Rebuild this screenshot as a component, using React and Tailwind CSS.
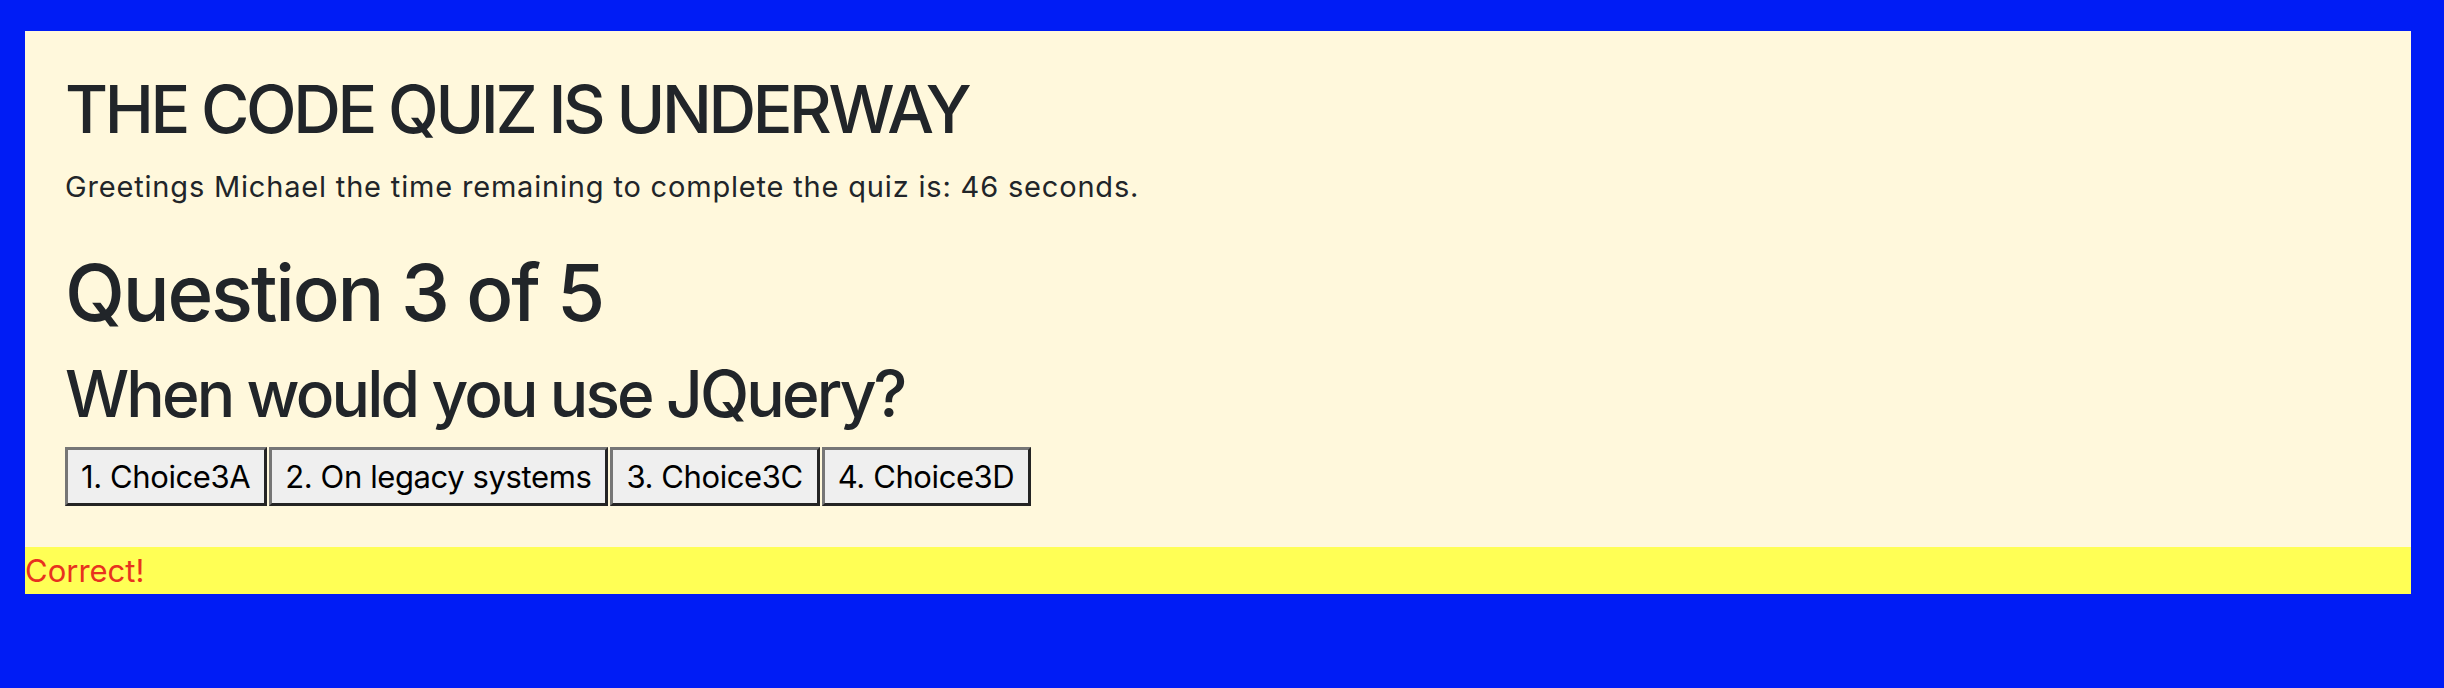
export default function App() {
  const choices = ["1. Choice3A", "2. On legacy systems", "3. Choice3C", "4. Choice3D"];
  return (
    <div className="min-h-[688px] w-[2444px] bg-[#001cf5] pt-[31px] pl-[25px] font-['Inter',sans-serif]">
      <div className="w-[2386px] bg-[#fff8dc]">
        <div className="pl-[40px] pt-[39px] pb-[41px] text-[#212529]">
          <h1 className="text-[66px] leading-[1.2] font-medium tracking-[-3.4px]">THE CODE QUIZ IS UNDERWAY</h1>
          <p className="mt-[16px] text-[29px] leading-[1.5] tracking-[0.82px]">Greetings Michael the time remaining to complete the quiz is: 46 seconds.</p>
          <h2 className="mt-[37px] text-[78px] leading-[1.2] font-medium tracking-[-2.2px]">Question 3 of 5</h2>
          <h3 className="mt-[17px] text-[64px] leading-[1.2] font-medium tracking-[-2.85px]">When would you use JQuery?</h3>
          <div className="mt-[14px] flex gap-[2px]">
            {choices.map((c) => (
              <button
                key={c}
                className="h-[59px] border-[3px] border-t-[#767676] border-l-[#767676] border-b-[#242424] border-r-[#242424] bg-[#efefef] pl-[13px] pr-[14px] text-[31px] leading-none tracking-[-0.4px] text-black"
              >
                {c}
              </button>
            ))}
          </div>
        </div>
        <div className="h-[47px] bg-[#ffff55] text-[31px] leading-[47px] text-[#e8321e]">Correct!</div>
      </div>
    </div>
  );
}
